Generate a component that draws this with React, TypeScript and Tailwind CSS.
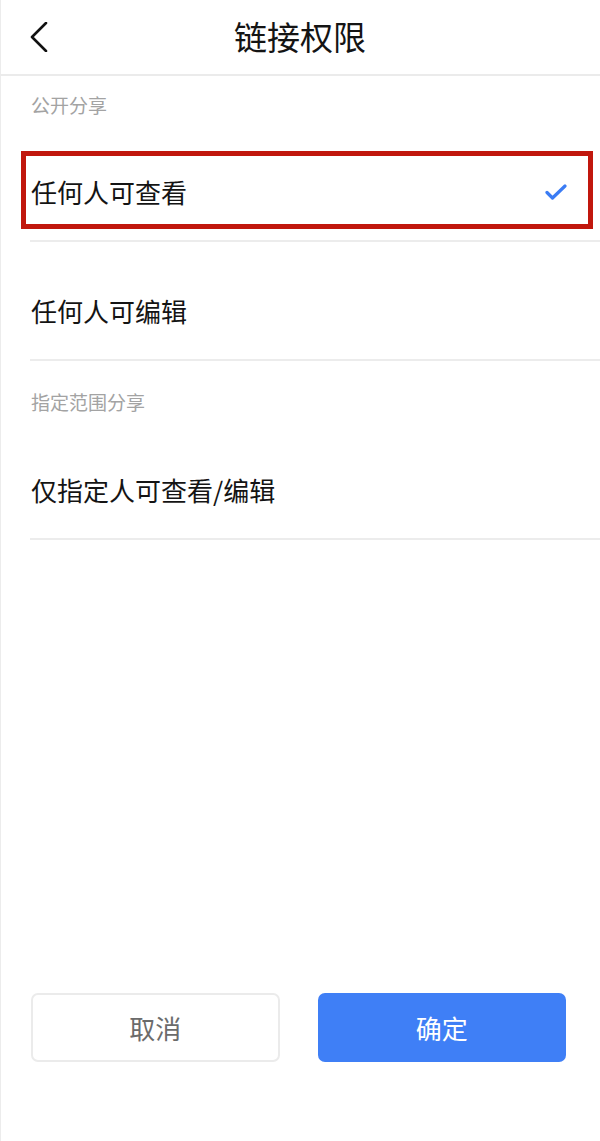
import React, { useState } from 'react';

type Option = { id: string; label: string };

const publicOptions: Option[] = [
  { id: 'view', label: '任何人可查看' },
  { id: 'edit', label: '任何人可编辑' },
];

const font = { fontFamily: '"Noto Sans CJK SC", "Noto Sans", sans-serif' };

function BackIcon() {
  return (
    <svg width="18" height="30" viewBox="0 0 18 30" fill="none">
      <polyline points="16,1 2,15 16,29" stroke="#111" strokeWidth="2.6" strokeLinecap="round" strokeLinejoin="round" />
    </svg>
  );
}

function CheckIcon() {
  return (
    <svg width="22" height="17" viewBox="0 0 22 17" fill="none">
      <polyline points="2,8.5 7.5,14 20,2" stroke="#3b7cf4" strokeWidth="3.2" strokeLinecap="round" strokeLinejoin="round" />
    </svg>
  );
}

function OptionRow({ label, selected, highlighted, onClick, className = '' }: {
  label: string;
  selected?: boolean;
  highlighted?: boolean;
  onClick?: () => void;
  className?: string;
}) {
  return (
    <div
      onClick={onClick}
      className={`relative ml-[30px] h-[98px] flex items-center justify-between pl-px pr-[33px] border-b-2 border-[#ececec] cursor-pointer ${className}`}
    >
      <span className="text-[26px] leading-[30px] text-[#141414]">{label}</span>
      {selected && <CheckIcon />}
      {highlighted && (
        <div className="absolute left-[-9px] right-[7px] top-[7px] bottom-[11px] border-[5px] border-[#c1170d] pointer-events-none" />
      )}
    </div>
  );
}

export default function App() {
  const [selected, setSelected] = useState('view');

  return (
    <div className="w-[600px] h-[1141px] bg-white flex flex-col shadow-[inset_1px_0_0_#ececec]" style={font}>
      {/* Header */}
      <header className="relative h-[76px] border-b-2 border-[#ebebeb] flex items-center justify-center shrink-0">
        <button className="absolute left-[30px] top-[22px]">
          <BackIcon />
        </button>
        <h1 className="text-[33px] leading-[40px] text-[#141414] -mt-[2px]">链接权限</h1>
      </header>

      {/* Public sharing */}
      <div className="h-[68px] pt-[19px] pl-[31px]">
        <p className="text-[19px] leading-[20px] text-[#a3a3a3]">公开分享</p>
      </div>
      {publicOptions.map((opt, i) => (
        <OptionRow
          key={opt.id}
          label={opt.label}
          selected={selected === opt.id}
          highlighted={i === 0}
          onClick={() => setSelected(opt.id)}
          className={i === 1 ? 'mt-[21px]' : ''}
        />
      ))}

      {/* Scoped sharing */}
      <div className="h-[81px] pt-[31px] pl-[31px]">
        <p className="text-[19px] leading-[20px] text-[#a3a3a3]">指定范围分享</p>
      </div>
      <OptionRow
        label="仅指定人可查看/编辑"
        selected={selected === 'scoped'}
        onClick={() => setSelected('scoped')}
      />

      <div className="flex-1" />

      {/* Actions */}
      <div className="grid grid-cols-2 gap-[38px] pl-[31px] pr-[34px] pb-[79px] shrink-0">
        <button className="h-[69px] rounded-[7px] border-2 border-[#ebebeb] bg-white text-[26px] text-[#6b6b6b]">
          取消
        </button>
        <button className="h-[69px] rounded-[7px] bg-[#3f7ff6] text-[26px] text-white">
          确定
        </button>
      </div>
    </div>
  );
}
